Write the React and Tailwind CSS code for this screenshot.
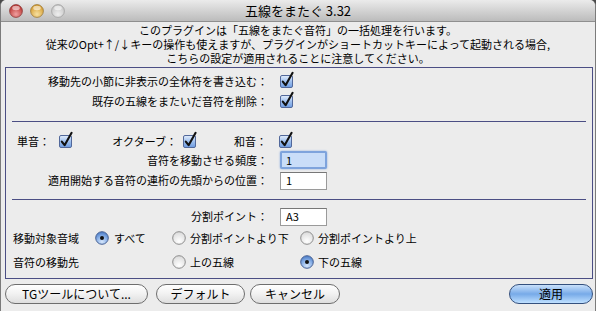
import React from "react"

function Check() {
  return (
    <svg width="13" height="13" viewBox="0 0 13 13" overflow="visible" className="shrink-0">
      <defs>
        <linearGradient id="cbg" x1="0" y1="0" x2="0" y2="1">
          <stop offset="0" stopColor="#e4eefc" />
          <stop offset="0.5" stopColor="#9fc0ee" />
          <stop offset="1" stopColor="#6d9be0" />
        </linearGradient>
      </defs>
      <rect x="0.5" y="0.5" width="12" height="12" rx="1.5" fill="url(#cbg)" stroke="#52689a" />
      <path d="M2.8 6.6 L5.6 10.2 L12.6 -2.2" fill="none" stroke="#111" strokeWidth="2.1" strokeLinecap="round" strokeLinejoin="round" />
    </svg>
  )
}

function Radio({ on }) {
  return (
    <svg width="14" height="14" viewBox="0 0 14 14" className="shrink-0">
      <defs>
        <radialGradient id="roff" cx="0.5" cy="0.75" r="0.7">
          <stop offset="0" stopColor="#ffffff" />
          <stop offset="1" stopColor="#dcdcdc" />
        </radialGradient>
        <radialGradient id="ron" cx="0.5" cy="0.8" r="0.75">
          <stop offset="0" stopColor="#d6e6fb" />
          <stop offset="0.6" stopColor="#86aee6" />
          <stop offset="1" stopColor="#4f7fc8" />
        </radialGradient>
      </defs>
      <circle cx="7" cy="7" r="6.3" fill={on ? "url(#ron)" : "url(#roff)"} stroke={on ? "#4a6394" : "#8c8c8c"} strokeWidth="1" />
      {on && <circle cx="7" cy="7" r="2" fill="#111" />}
    </svg>
  )
}

function Light({ c1, c2, c3 }) {
  const id = "l" + c1.slice(1)
  return (
    <svg width="14" height="14" viewBox="0 0 14 14">
      <defs>
        <radialGradient id={id} cx="0.5" cy="0.75" r="0.7">
          <stop offset="0" stopColor={c1} />
          <stop offset="1" stopColor={c2} />
        </radialGradient>
      </defs>
      <circle cx="7" cy="7" r="6.4" fill={`url(#${id})`} stroke={c3} strokeWidth="0.8" />
      <ellipse cx="7" cy="4" rx="3.8" ry="2.2" fill="#ffffff" opacity="0.55" />
    </svg>
  )
}

function Btn({ w, children, blue }) {
  return (
    <div
      className={`h-[20px] ${w} rounded-full border flex items-center justify-center text-[12px] leading-none ${
        blue
          ? "border-[#34507e] bg-gradient-to-b from-[#c9e0fa] via-[#77aae8] to-[#bfe0ff]"
          : "border-[#6e6e6e] bg-gradient-to-b from-[#ffffff] via-[#f1f1f1] to-[#dedede]"
      }`}
    >
      {children}
    </div>
  )
}

function Input({ value, focus }) {
  return focus ? (
    <div className="ml-[12px] w-[47px] h-[18px] border-2 border-[#7ea3dc] rounded-[2px] bg-[#c9ddf8] flex items-center pl-[4px] shadow-[0_0_2px_#7ea3dc]">
      {value}
    </div>
  ) : (
    <div className="ml-[12px] w-[47px] h-[18px] border border-[#9a9a9a] border-t-[#777] bg-white flex items-center pl-[5px]">
      {value}
    </div>
  )
}

export default function App() {
  return (
    <div className="w-[596px] h-[311px] bg-[#4a4a4a] font-['Noto_Sans_CJK_JP',sans-serif] text-[11px] text-black overflow-hidden">
      <div className="w-[596px] h-[311px] rounded-t-[6px] border-x border-[#7b7b7b] bg-[#ececec] flex flex-col overflow-hidden">
        {/* title bar */}
        <div className="h-[22px] shrink-0 relative flex items-center pl-[8px] gap-[7px] bg-gradient-to-b from-[#ebebeb] to-[#bcbcbc] border-b border-[#8f8f8f]">
          <Light c1="#f0a0a0" c2="#b8302c" c3="#8a3a38" />
          <Light c1="#f6e0a0" c2="#d49a2c" c3="#9a7a3a" />
          <Light c1="#eeeeee" c2="#c4c4c4" c3="#a0a0a0" />
          <div className="absolute inset-0 flex items-center justify-center text-[13px] leading-none">五線をまたぐ 3.32</div>
        </div>

        {/* description */}
        <div className="text-center mt-[1px]">
          <p className="h-[14px] leading-[12px] pt-[1px]">このプラグインは「五線をまたぐ音符」の一括処理を行います。</p>
          <p className="h-[14px] leading-[12px] pt-[1px]">従来のOpt+↑/↓キーの操作も使えますが、プラグインがショートカットキーによって起動される場合,</p>
          <p className="h-[14px] leading-[12px] pt-[1px]">こちらの設定が適用されることに注意してください。</p>
        </div>

        {/* options box */}
        <div className="ml-[4px] mt-[2px] w-[588px] h-[212px] shrink-0 border border-[#4b4e84] flex flex-col">
          <div className="pt-[3px]">
            <div className="h-[20px] flex items-center">
              <span className="w-[262px] text-right">移動先の小節に非表示の全休符を書き込む：</span>
              <span className="ml-[12px]"><Check /></span>
            </div>
            <div className="h-[20px] flex items-center">
              <span className="w-[262px] text-right">既存の五線をまたいだ音符を削除：</span>
              <span className="ml-[12px]"><Check /></span>
            </div>
          </div>

          <div className="mt-[10px] mx-[6px] h-px bg-[#4b4e84]" />

          <div className="mt-[9px] h-[20px] flex items-center">
            <span className="w-[53px] pl-[11px]">単音：</span>
            <Check />
            <span className="w-[111px] text-right pr-[6px]">オクターブ：</span>
            <Check />
            <span className="w-[71px] text-right">和音：</span>
            <span className="ml-[12px]"><Check /></span>
          </div>
          <div className="h-[18px] flex items-center">
            <span className="w-[262px] text-right">音符を移動させる頻度：</span>
            <Input value="1" focus />
          </div>
          <div className="mt-[2px] h-[19px] flex items-center">
            <span className="w-[262px] text-right">適用開始する音符の連桁の先頭からの位置：</span>
            <Input value="1" />
          </div>

          <div className="mt-[9px] mx-[6px] h-px bg-[#4b4e84]" />

          <div className="mt-[7px] h-[19px] flex items-center">
            <span className="w-[262px] text-right">分割ポイント：</span>
            <Input value="A3" />
          </div>
          <div className="mt-[2px] h-[20px] flex items-center">
            <span className="w-[89px] pl-[7px]">移動対象音域</span>
            <span className="w-[76px] flex items-center gap-[5px]"><Radio on />すべて</span>
            <span className="w-[129px] flex items-center gap-[4px] pl-[1px]"><Radio />分割ポイントより下</span>
            <span className="flex items-center gap-[4px]"><Radio />分割ポイントより上</span>
          </div>
          <div className="mt-[4px] h-[20px] flex items-center">
            <span className="w-[89px] pl-[7px]">音符の移動先</span>
            <span className="w-[76px]" />
            <span className="w-[129px] flex items-center gap-[4px] pl-[1px]"><Radio />上の五線</span>
            <span className="flex items-center gap-[4px]"><Radio on />下の五線</span>
          </div>
        </div>

        {/* buttons */}
        <div className="mt-[5px] pl-[4px] pr-[2px] flex items-center">
          <Btn w="w-[143px]">TGツールについて...</Btn>
          <div className="ml-[8px]"><Btn w="w-[89px]">デフォルト</Btn></div>
          <div className="ml-[5px]"><Btn w="w-[90px]">キャンセル</Btn></div>
          <div className="ml-auto"><Btn w="w-[84px]" blue>適用</Btn></div>
        </div>
      </div>
    </div>
  )
}
